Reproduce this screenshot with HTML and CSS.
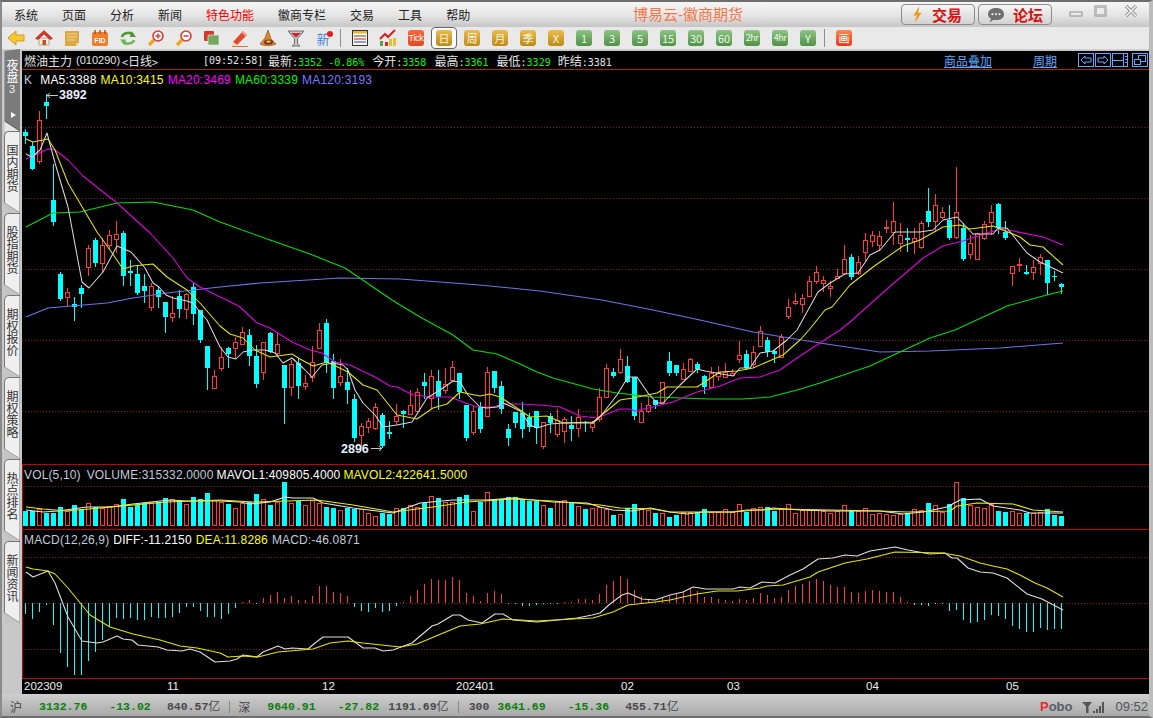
FILE: index.html
```html
<!DOCTYPE html>
<html lang="zh-CN">
<head>
<meta charset="utf-8">
<title>博易云-徽商期货</title>
<link rel="stylesheet" href="styles.css">
<script src="chart.js" defer></script>
</head>
<body>
<div class="window">
  <header class="menubar">
    <nav class="menu">
      <span>系统</span><span>页面</span><span>分析</span><span>新闻</span><span class="menu-hot">特色功能</span><span>徽商专栏</span><span>交易</span><span>工具</span><span>帮助</span>
    </nav>
    <div class="app-title">博易云-徽商期货</div>
    <div class="actions">
      <button class="action">
        <svg class="action-ic" viewBox="0 0 12 18"><path d="M8 0 L1.5 10 L5 10 L3 18 L10.5 7 L6.8 7 Z" fill="#f09a20"/></svg>
        <span>交易</span>
      </button>
      <button class="action">
        <svg class="action-ic wide" viewBox="0 0 18 16"><path d="M9 1 C14 1 17 3.6 17 7.2 C17 10.8 14 13 9 13 L6 13 L3 15.6 L3.8 11.6 C2 10.6 1 9 1 7.2 C1 3.6 4 1 9 1 Z" fill="#6f6f6f"/><circle cx="5.5" cy="7.2" r="1.1" fill="#e4e4e4"/><circle cx="9" cy="7.2" r="1.1" fill="#e4e4e4"/><circle cx="12.5" cy="7.2" r="1.1" fill="#e4e4e4"/></svg>
        <span>论坛</span>
      </button>
    </div>
    <div class="winbtns">
      <svg class="winbtn" viewBox="0 0 20 14"><rect x="4" y="8" width="12" height="4" fill="#e8e8e8" stroke="#8f8f8f"/></svg>
      <svg class="winbtn" viewBox="0 0 20 14"><rect x="4" y="2" width="11" height="10" fill="none" stroke="#8f8f8f"/><rect x="5.5" y="3.5" width="8" height="7" fill="#ececec" stroke="#bdbdbd"/></svg>
      <svg class="winbtn winbtn-close" viewBox="0 0 20 14"><path d="M5 2 L15 12 M15 2 L5 12" stroke="#8f8f8f" stroke-width="3.4"/><path d="M5 2 L15 12 M15 2 L5 12" stroke="#f0f0f0" stroke-width="1.6"/></svg>
    </div>
  </header>

  <div class="toolbar">
    <span class="tool"><svg class="ic" viewBox="0 0 18 16"><path d="M1 8 L9 1 L9 5 L17 5 L17 11 L9 11 L9 15 Z" fill="#f7c832" stroke="#d89a14"/></svg></span>
    <span class="tool"><svg class="ic" viewBox="0 0 18 18"><path d="M4 9 L14 9 L14 16 L4 16 Z" fill="#f2ead8" stroke="#b9a68a"/><rect x="7.5" y="11" width="3.5" height="5" fill="#b5542a"/><path d="M0.5 9.5 L9 1.5 L17.5 9.5 L15 10.5 L9 5 L3 10.5 Z" fill="#d8342a" stroke="#a8201a" stroke-width=".6"/></svg></span>
    <span class="tool"><svg class="ic" viewBox="0 0 18 18"><path d="M2 2 L16 2 L16 14 L13 17 L2 17 Z" fill="#dca844"/><path d="M4 5 L14 5 M4 8 L14 8 M4 11 L12 11" stroke="#f0d890"/><path d="M13 17 L13 14 L16 14 Z" fill="#f0d890"/></svg></span>
    <span class="tool"><svg class="ic" viewBox="0 0 18 18"><rect x="1" y="3" width="16" height="14" rx="2" fill="#ee7d2c"/><path d="M4 1 L4 5 M9 1 L9 5 M14 1 L14 5" stroke="#a84c18" stroke-width="1.4"/><text x="9" y="14" class="ic-text-fid">FID</text></svg></span>
    <span class="tool"><svg class="ic" viewBox="0 0 18 18"><path d="M3 8 C4 3.5 12 2.5 14.5 6" fill="none" stroke="#4a9a38" stroke-width="2.6"/><path d="M12 2 L17 8 L11 8 Z" fill="#4a9a38"/><path d="M15 11 C14 15 6 16 3.5 12.5" fill="none" stroke="#6cb84e" stroke-width="2.6"/><path d="M6 16.5 L1 10.5 L7 10.5 Z" fill="#6cb84e"/></svg></span>
    <span class="tool"><svg class="ic" viewBox="0 0 18 18"><path d="M7 11 L2 16" stroke="#eaa818" stroke-width="3.4"/><circle cx="11" cy="7" r="5" fill="#fff" stroke="#d83a3a" stroke-width="1.6"/><path d="M8.5 7 L13.5 7 M11 4.5 L11 9.5" stroke="#d83a3a" stroke-width="1.5"/></svg></span>
    <span class="tool"><svg class="ic" viewBox="0 0 18 18"><path d="M7 11 L2 16" stroke="#eaa818" stroke-width="3.4"/><circle cx="11" cy="7" r="5" fill="#fff" stroke="#d83a3a" stroke-width="1.6"/><path d="M8.5 7 L13.5 7" stroke="#d83a3a" stroke-width="1.5"/></svg></span>
    <span class="tool"><svg class="ic" viewBox="0 0 18 18"><rect x="1" y="2" width="10" height="10" rx="1" fill="#d8362c"/><rect x="5" y="6" width="11" height="10" rx="1" fill="#72aa5c" stroke="#e8e8e8" stroke-width=".7"/></svg></span>
    <span class="tool"><svg class="ic" viewBox="0 0 18 18"><path d="M2 13 L12 2 L16 6 L6 16 Z" fill="#e2492e"/><path d="M2 13 L1 17 L6 16 Z" fill="#f3d8a8"/><path d="M12 2 L16 6 L14.5 7.5 L10.5 3.5 Z" fill="#f4a080"/><path d="M1 17.5 L17 17.5" stroke="#f07028"/></svg></span>
    <span class="tool"><svg class="ic" viewBox="0 0 18 18"><path d="M9 1 L12 10 L17 15 C12 17 5 17 1 15 L6 9 Z" fill="#d98a30" stroke="#8a4a1c" stroke-width=".7"/><ellipse cx="9.5" cy="13" rx="4.5" ry="2.6" fill="#7a3418"/><ellipse cx="9.5" cy="12.6" rx="2.4" ry="1.2" fill="#e8c05a"/></svg></span>
    <span class="tool"><svg class="ic" viewBox="0 0 18 18"><path d="M1 2 L17 2 L10.5 9.5 L10.5 15 L13 17 L5 17 L7.5 15 L7.5 9.5 Z" fill="#c8c8c8" stroke="#6e6e6e"/><path d="M4 4 L14 4 L9 8.5 Z" fill="#d82030"/></svg></span>
    <span class="tool"><span class="new-glyph">新</span><i class="new-dot"></i></span>
    <span class="tool-sep"></span>
    <span class="tool"><svg class="ic" viewBox="0 0 18 18"><rect x="1.5" y="1.5" width="15" height="15" fill="#fbf8ec" stroke="#333"/><rect x="2" y="2" width="14" height="2.5" fill="#e8b838"/><path d="M3 7 L15 7" stroke="#555"/><path d="M3 10 L15 10" stroke="#d02020"/><path d="M3 13 L15 13" stroke="#2040c0"/></svg></span>
    <span class="tool"><svg class="ic" viewBox="0 0 18 18"><rect x="1" y="12" width="3" height="5" fill="#58a048"/><rect x="6" y="13" width="3" height="4" fill="#e02828"/><rect x="10" y="10" width="3" height="7" fill="#e8c030"/><rect x="14" y="9" width="3" height="8" fill="#e8c030"/><path d="M1 10 L6 5 L9 8 L16 1" fill="none" stroke="#d82020" stroke-width="2"/></svg></span>
    <span class="tool"><span class="tick">Tick</span></span>
    <span class="tool tool-active"><b class="pd gold">日</b></span>
    <span class="tool"><b class="pd gold">周</b></span>
    <span class="tool"><b class="pd gold">月</b></span>
    <span class="tool"><b class="pd gold">季</b></span>
    <span class="tool"><b class="pd gold">X</b></span>
    <span class="tool"><b class="pd green">1</b></span>
    <span class="tool"><b class="pd green">3</b></span>
    <span class="tool"><b class="pd green">5</b></span>
    <span class="tool"><b class="pd green">15</b></span>
    <span class="tool"><b class="pd green">30</b></span>
    <span class="tool"><b class="pd green">60</b></span>
    <span class="tool"><b class="pd green small">2hr</b></span>
    <span class="tool"><b class="pd green small">4hr</b></span>
    <span class="tool"><b class="pd green">Y</b></span>
    <span class="tool-sep"></span>
    <span class="tool"><b class="pd red">画</b></span>
  </div>

  <main class="workspace">
    <aside class="tabs">
      <div class="tab tab-active">
        <svg class="tab-shape" viewBox="0 0 18 82"><path d="M2.5 72 L2.5 2 L18 0 L18 82 Z" fill="#7b7b7b"/><path d="M2.5 72 L18 82 L2.5 82 Z" fill="#e6e6e6"/><path d="M2.5 72 L18 82" stroke="#555" fill="none"/></svg>
        <span class="tab-label">夜盘</span><span class="tab-num">3</span><i class="tab-arrow"></i>
      </div>
      <div class="tab"><svg class="tab-shape" viewBox="0 0 18 82"><path d="M2.5 72 L2.5 5 Q2.5 1 6 .5 L18 .5 L18 82 Z" fill="#efefef" stroke="#777"/><path d="M2.5 72 L18 82 L2.5 82 Z" fill="#c4c4c4"/></svg><span class="tab-label">国内期货</span></div>
      <div class="tab"><svg class="tab-shape" viewBox="0 0 18 82"><path d="M2.5 72 L2.5 5 Q2.5 1 6 .5 L18 .5 L18 82 Z" fill="#efefef" stroke="#777"/><path d="M2.5 72 L18 82 L2.5 82 Z" fill="#c4c4c4"/></svg><span class="tab-label">股指期货</span></div>
      <div class="tab"><svg class="tab-shape" viewBox="0 0 18 82"><path d="M2.5 72 L2.5 5 Q2.5 1 6 .5 L18 .5 L18 82 Z" fill="#efefef" stroke="#777"/><path d="M2.5 72 L18 82 L2.5 82 Z" fill="#c4c4c4"/></svg><span class="tab-label">期权报价</span></div>
      <div class="tab"><svg class="tab-shape" viewBox="0 0 18 82"><path d="M2.5 72 L2.5 5 Q2.5 1 6 .5 L18 .5 L18 82 Z" fill="#efefef" stroke="#777"/><path d="M2.5 72 L18 82 L2.5 82 Z" fill="#c4c4c4"/></svg><span class="tab-label">期权策略</span></div>
      <div class="tab"><svg class="tab-shape" viewBox="0 0 18 82"><path d="M2.5 72 L2.5 5 Q2.5 1 6 .5 L18 .5 L18 82 Z" fill="#efefef" stroke="#777"/><path d="M2.5 72 L18 82 L2.5 82 Z" fill="#c4c4c4"/></svg><span class="tab-label">热点排名</span></div>
      <div class="tab"><svg class="tab-shape" viewBox="0 0 18 82"><path d="M2.5 72 L2.5 5 Q2.5 1 6 .5 L18 .5 L18 82 Z" fill="#efefef" stroke="#777"/><path d="M2.5 72 L18 82 L2.5 82 Z" fill="#c4c4c4"/></svg><span class="tab-label">新闻资讯</span></div>
    </aside>

    <section class="chart">
      <div class="quote">
        <div class="symbol">
          <span class="cjk">燃油主力</span><span class="code">(010290)</span><span class="period"><u>&lt;</u>日线<u>&gt;</u></span>
        </div>
        <span class="q-time">[09:52:58]</span>
        <span class="q-item">最新<i>:</i><em>3352</em></span>
        <span class="q-item q-near"><em>-0.86%</em></span>
        <span class="q-item">今开<i>:</i><em>3358</em></span>
        <span class="q-item">最高<i>:</i><em>3361</em></span>
        <span class="q-item">最低<i>:</i><em>3329</em></span>
        <span class="q-item q-last">昨结<i>:3381</i></span>
        <div class="quote-links">
          <a class="q-link">商品叠加</a>
          <a class="q-link q-link-period">周期</a>
          <div class="nav-btns">
            <svg class="nav-btn" viewBox="0 0 16 14"><rect x=".5" y=".5" width="15" height="13" fill="none" stroke="#5ea8ff"/><path d="M7 3 L3 7 L7 11 L7 9 L13 9 L13 5 L7 5 Z" fill="none" stroke="#5ea8ff"/></svg>
            <svg class="nav-btn" viewBox="0 0 16 14"><rect x=".5" y=".5" width="15" height="13" fill="none" stroke="#5ea8ff"/><path d="M9 3 L13 7 L9 11 L9 9 L3 9 L3 5 L9 5 Z" fill="none" stroke="#5ea8ff"/></svg>
            <svg class="nav-btn" viewBox="0 0 16 14"><rect x=".5" y=".5" width="15" height="13" fill="none" stroke="#5ea8ff"/><path d="M1 7.5 L11 7.5 M11.5 1 L11.5 13 M13 3.5 L15 3.5 M13 6.5 L15 6.5 M13 9.5 L15 9.5" stroke="#5ea8ff"/></svg>
            <svg class="nav-btn nav-btn-gap" viewBox="0 0 16 14"><rect x=".5" y=".5" width="15" height="13" fill="none" stroke="#5ea8ff"/><rect x="6.5" y="2.5" width="7" height="6" fill="none" stroke="#5ea8ff"/><rect x="2.5" y="6.5" width="6" height="5" fill="#000" stroke="#5ea8ff"/></svg>
          </div>
        </div>
      </div>

      <div class="panel panel-main" id="panel-main">
        <div class="legend">
          <span class="c-k">K</span><span class="c-white">MA5:3388</span><span class="c-yellow">MA10:3415</span><span class="c-magenta">MA20:3469</span><span class="c-green">MA60:3339</span><span class="c-blue">MA120:3193</span>
        </div>
      </div>
      <div class="panel panel-vol" id="panel-vol">
        <div class="legend">
          <span class="c-k">VOL(5,10)</span><span class="c-k">VOLUME:315332.0000</span><span class="c-white">MAVOL1:409805.4000</span><span class="c-yellow">MAVOL2:422641.5000</span>
        </div>
      </div>
      <div class="panel panel-macd" id="panel-macd">
        <div class="legend">
          <span class="c-k">MACD(12,26,9)</span><span class="c-white">DIFF:-11.2150</span><span class="c-yellow">DEA:11.8286</span><span class="c-k">MACD:-46.0871</span>
        </div>
      </div>
      <div class="axis" id="panel-axis"></div>
    </section>
  </main>

  <footer class="statusbar">
    <span class="st-name">沪</span>
    <span class="st-val">3132.76</span>
    <span class="st-chg">-13.02</span>
    <span class="st-amt">840.57<i>亿</i></span>
    <span class="st-sep"></span>
    <span class="st-name">深</span>
    <span class="st-val">9640.91</span>
    <span class="st-chg">-27.82</span>
    <span class="st-amt">1191.69<i>亿</i></span>
    <span class="st-sep"></span>
    <span class="st-code">300</span>
    <span class="st-val st-val-tight">3641.69</span>
    <span class="st-chg">-15.36</span>
    <span class="st-amt">455.71<i>亿</i></span>
    <div class="st-right">
      <span class="pobo"><b>P</b>obo</span>
      <svg class="signal" viewBox="0 0 22 13"><path d="M0 1 L10 1 L6.5 5.5 L6.5 12 L4 12 L4 5.5 Z" fill="#555"/><rect x="11" y="10" width="2" height="2" fill="#555"/><rect x="14" y="8" width="2" height="4" fill="#555"/><rect x="17" y="5" width="2" height="7" fill="#555"/><rect x="20" y="1" width="2" height="11" fill="#555"/></svg>
      <span class="clock">09:52</span>
    </div>
  </footer>
</div>
</body>
</html>
```

FILE: styles.css
```css
* { box-sizing: border-box; }
html, body { margin: 0; padding: 0; background: #c4c4c4; }
body { font-family: "Liberation Sans", "Noto Sans CJK SC", sans-serif; }

.window {
  width: 1153px;
  height: 718px;
  display: flex;
  flex-direction: column;
  border-top: 2px solid #6e6e6e;
  border-left: 2px solid #8a8a8a;
  border-right: 4px solid #bcbcbc;
  border-bottom: 2px solid #6e6e6e;
  background: #c8c8c8;
  overflow: hidden;
}

/* menu bar */
.menubar {
  height: 25px;
  flex: none;
  display: flex;
  align-items: center;
  padding-left: 12px;
  background: linear-gradient(#f6f6f6, #e4e4e4 55%, #c6c6c6);
}
.menu { display: flex; gap: 24px; font-size: 12px; color: #222; width: 456px; white-space: nowrap; }
.menu-hot { color: #f00000; }
.app-title {
  margin-left: 163px;
  width: 112px;
  font-size: 15px;
  line-height: 20px;
  color: #f4774a;
  white-space: nowrap;
}
.actions { display: flex; gap: 3px; margin-left: 156px; }
.action {
  width: 74px;
  height: 21px;
  padding: 0 0 0 10px;
  display: flex;
  align-items: center;
  gap: 9px;
  border: 1px solid #8c8c8c;
  border-radius: 4px;
  background: linear-gradient(#f6f6f6, #d2d2d2);
  color: #d81010;
  font: bold 15px "Noto Sans CJK SC", sans-serif;
}
.action-ic { width: 11px; height: 17px; flex: none; }
.action-ic.wide { width: 18px; height: 16px; margin-left: -2px; margin-right: -1px; }
.winbtns { display: flex; margin-left: 14px; gap: 5px; align-self: flex-start; margin-top: 2px; }
.winbtn { width: 20px; height: 14px; }
.winbtn-close { margin-left: 5px; }

/* tool bar */
.toolbar {
  height: 23px;
  flex: none;
  display: flex;
  align-items: center;
  background: #e9e9e9;
  border-bottom: 1px solid #d0d0d0;
  margin-bottom: 1px;
}
.tool { width: 28px; height: 22px; flex: none; display: flex; align-items: center; justify-content: center; position: relative; }
.ic { width: 18px; height: 18px; display: block; }
.ic-text-fid { font: bold 7px "Liberation Sans", sans-serif; fill: #fff; text-anchor: middle; }
.tool-sep { width: 8px; height: 18px; flex: none; margin-left: 0; position: relative; }
.tool-sep::before { content: ""; display: block; width: 1px; height: 18px; margin-left: 2px; background: #8d8d8d; }
.new-glyph { font: 13px "Noto Sans CJK SC", sans-serif; color: #4a86e0; margin-right: 2px; }
.new-dot { position: absolute; left: 17px; top: 4px; width: 6px; height: 6px; border-radius: 50%; background: #e81c1c; }
.tick {
  width: 16px;
  height: 16px;
  border-radius: 3px;
  background: linear-gradient(#f8683c, #e04a20);
  color: #fff;
  font: 9px/16px "Liberation Sans", sans-serif;
  text-align: center;
  letter-spacing: -.3px;
}
.pd {
  width: 16px;
  height: 16px;
  display: block;
  border-radius: 3px;
  text-align: center;
  color: #f6f2dc;
  font: 400 11px/16px "Noto Sans CJK SC", "Liberation Sans", sans-serif;
  overflow: hidden;
}
.pd.small { font-size: 9px; letter-spacing: -.5px; }
.gold { background: linear-gradient(#e8bd52, #bc8a14); }
.green { background: linear-gradient(#8ec484, #4f9146); color: #eef6ea; }
.red { background: linear-gradient(#f88a52, #ea3a1c); color: #fff; }
.tool-active::before {
  content: "";
  position: absolute;
  left: 1px;
  right: 1px;
  top: 0;
  bottom: 0;
  background: #fff;
  border: 1px solid #666;
  border-radius: 4px;
}
.tool-active .pd { position: relative; }

/* work space */
.workspace { flex: 1; min-height: 0; display: flex; }

.tabs { width: 20px; flex: none; margin-top: -2px; display: flex; flex-direction: column; }
.tab {
  position: relative;
  height: 82px;
  flex: none;
  padding: 13px 0 0 4px;
  display: flex;
  flex-direction: column;
  align-items: flex-start;
  color: #333;
}
.tab-shape { position: absolute; left: 0; top: 0; width: 18px; height: 82px; }
.tab-label {
  position: relative;
  writing-mode: vertical-rl;
  text-orientation: upright;
  font: 12px/13px "Noto Sans CJK SC", sans-serif;
  letter-spacing: 0;
}
.tab-active { color: #fff; padding-top: 10px; }
.tab-num { position: relative; font-size: 11px; line-height: 11px; margin: 1px 0 0 3px; color: #eee; }
.tab-arrow {
  position: absolute;
  left: 9px;
  top: 63px;
  border-left: 5px solid #fff;
  border-top: 3.5px solid transparent;
  border-bottom: 3.5px solid transparent;
}

.chart { flex: 1; min-width: 0; background: #000; display: flex; flex-direction: column; color: #ddd; }

.quote {
  height: 19px;
  flex: none;
  display: flex;
  align-items: center;
  padding: 0 1px 0 2px;
  border-bottom: 1px solid #a02818;
  font: 10px "DejaVu Sans Mono", monospace;
  color: #e4e4e4;
  white-space: nowrap;
}
.symbol { width: 179px; display: flex; align-items: center; gap: 4px; }
.cjk { font: 12px "Noto Sans CJK SC", sans-serif; }
.code { font: 11px "Liberation Sans", sans-serif; }
.period { margin-left: -2px; font: 12px "Noto Sans CJK SC", sans-serif; }
.period u { text-decoration: none; font: 10px "DejaVu Sans Mono", monospace; }
.q-time { width: 57px; }
.q-item { margin-left: 8px; font: 12px "Noto Sans CJK SC", sans-serif; }
.q-item i { font: 10px "DejaVu Sans Mono", monospace; }
.q-item em { font: 10px "DejaVu Sans Mono", monospace; color: #18f018; }
.q-near { margin-left: 6px; }
.q-last { margin-left: 7px; }
.quote-links { margin-left: auto; display: flex; align-items: center; }
.q-link { color: #5ea8ff; text-decoration: underline; font: 12px "Noto Sans CJK SC", sans-serif; }
.q-link-period { margin-left: 41px; margin-right: 21px; }
.nav-btns { display: flex; gap: 1px; }
.nav-btn { width: 16px; height: 14px; display: block; }
.nav-btn-gap { margin-left: 3px; }

.panel { position: relative; flex: none; overflow: hidden; }
.panel-main { height: 394px; }
.panel-vol { height: 65px; border-top: 1px solid #c00000; border-left: 1px solid #c00000; }
.panel-macd { height: 149px; border-top: 1px solid #c00000; border-left: 1px solid #c00000; }
.plot { position: absolute; left: 0; top: 0; width: 100%; height: 100%; display: block; }
.legend {
  position: relative;
  z-index: 1;
  display: flex;
  gap: 4px;
  padding: 3px 0 0 2px;
  font-size: 12px;
  line-height: 14px;
  letter-spacing: .2px;
  white-space: nowrap;
}
.panel-vol .legend, .panel-macd .legend { padding-left: 1px; letter-spacing: .15px; }
.panel-vol .legend { gap: 3px; }
.panel-vol .legend span:first-child { margin-right: 3px; }
.c-k { color: #c0ccdc; }
.c-white { color: #fff; }
.c-yellow { color: #ffff00; }
.c-magenta { color: #ff00ff; }
.c-green { color: #00f000; }
.c-blue { color: #7878ff; }
.panel-main .legend span:first-child { margin-right: 4px; }

.axis { flex: 1; position: relative; border-top: 1px solid #c00000; }
.axis-text { font: 11.5px "Liberation Sans", sans-serif; fill: #eee; }
.peak-text { font: bold 12.5px "Liberation Sans", sans-serif; fill: #e8f0ff; }

/* status bar */
.statusbar {
  height: 22px;
  flex: none;
  display: flex;
  align-items: center;
  padding: 4px 0 0 8px;
  background: linear-gradient(#cfcfcf, #a8a8a8);
  font: bold 11.5px/14px "Liberation Mono", monospace;
  color: #4a4a4a;
  white-space: nowrap;
}
.st-name { width: 13px; font: 12px/14px "Noto Sans CJK SC", sans-serif; color: #444; }
.st-val { margin-left: 16px; color: #0e7f0e; }
.st-val-tight { margin-left: 8px; }
.st-chg { margin-left: 22px; color: #0e7f0e; width: 41px; }
.st-amt { width: 70px; text-align: right; }
.st-amt i { display: inline-block; font: 12px/12px "Noto Sans CJK SC", sans-serif; vertical-align: -1px; }
.st-sep { width: 1px; height: 12px; background: #8a8a8a; margin: 0 8px 0 9px; }
.st-code { margin-left: 2px; }
.st-right { margin-left: auto; display: flex; align-items: center; padding-right: 1px; }
.pobo { font: bold 13px/14px "Liberation Sans", sans-serif; color: #555e6a; }
.pobo b { color: #f02828; }
.signal { width: 22px; height: 13px; margin-left: 10px; }
.clock { margin-left: 11px; font: 13px/14px "Liberation Sans", sans-serif; color: #555; }
```

FILE: chart.js
```js
/* [isRed, high, bodyTop, bodyBottom, low] in page pixels; candle i sits at x = 25 + 7i */
var CANDLES = [
[0,129,132,136,144],[0,142,146,169,170],[1,111,120,161,164],[0,94,102,106,119],[0,164,200,222,226],
[0,272,274,299,301],[1,288,292,297,306],[0,297,304,307,321],[0,285,288,294,308],[1,245,248,267,276],
[0,238,240,263,267],[1,238,245,263,273],[1,230,235,245,249],[1,221,234,239,253],[0,231,233,276,286],
[0,260,271,273,286],[0,265,274,293,295],[0,274,286,291,303],[1,283,286,307,311],[0,287,290,297,308],
[0,302,302,317,333],[1,296,313,317,322],[0,290,296,309,318],[1,293,294,309,319],[0,283,287,314,325],
[0,310,310,340,343],[0,346,346,368,390],[1,370,376,388,388],[1,347,357,368,371],[0,347,348,354,368],
[1,337,342,348,359],[1,327,332,344,345],[0,329,335,356,366],[0,345,356,384,388],[1,342,342,372,380],
[0,332,333,352,353],[1,332,344,353,357],[0,365,365,388,424],[1,360,364,387,396],[0,358,363,386,399],
[1,375,383,386,390],[1,346,362,377,382],[1,323,330,348,349],[0,319,323,363,373],[0,354,361,388,399],
[1,359,376,382,386],[0,368,382,390,404],[0,394,399,438,442],[1,423,426,435,447],[1,418,421,427,433],
[1,403,407,428,430],[0,413,415,446,448],[0,421,432,434,439],[1,404,416,421,425],[0,410,411,414,428],
[1,390,405,414,414],[1,388,392,411,413],[0,373,382,386,399],[1,370,376,398,409],[0,370,381,397,410],
[1,368,384,390,394],[1,361,367,380,381],[0,373,373,392,399],[0,405,405,438,441],[1,406,411,432,435],
[0,402,407,429,433],[1,367,372,416,417],[0,371,371,388,393],[0,381,386,409,414],[0,424,429,438,446],
[0,412,412,423,428],[0,402,413,429,438],[0,413,417,427,432],[0,411,411,428,444],[1,422,422,446,449],
[0,413,416,423,433],[1,409,420,434,437],[1,417,419,431,443],[0,416,425,429,441],[1,409,417,428,437],
[0,421,422,423,432],[1,421,423,427,432],[1,388,397,419,422],[1,364,368,397,397],[0,368,372,376,378],
[1,349,359,372,374],[0,356,366,382,383],[0,377,377,416,420],[1,403,411,422,422],[1,397,405,411,413],
[0,400,400,405,409],[1,382,382,403,404],[0,352,361,373,376],[0,365,365,373,376],[1,363,369,379,380],
[1,358,359,371,372],[0,362,364,369,373],[0,375,376,387,394],[1,367,373,387,388],[1,366,372,376,381],
[1,363,372,377,378],[1,369,373,375,376],[1,341,355,359,363],[0,350,354,368,370],[1,346,352,364,367],
[1,326,331,346,347],[0,337,340,352,357],[0,350,351,354,363],[1,334,337,357,357],[1,299,307,316,319],
[1,293,301,303,305],[1,294,298,304,313],[1,276,281,296,296],[1,266,272,281,284],[1,276,280,283,292],
[1,281,286,288,297],[1,269,276,278,278],[1,245,259,273,273],[0,254,257,277,280],[1,256,262,273,275],
[1,233,240,252,261],[1,231,235,241,247],[1,231,236,245,251],[1,220,227,228,233],[1,202,221,232,245],
[1,223,235,243,252],[0,228,238,240,252],[1,228,238,241,254],[1,221,223,247,249],[0,188,211,222,227],
[1,194,205,221,232],[1,207,212,217,219],[0,205,220,238,240],[1,167,212,237,239],[0,223,228,259,261],
[1,235,243,254,259],[1,233,233,259,260],[1,221,224,238,240],[1,205,212,222,235],[0,203,204,228,234],
[0,221,232,238,240],[1,266,266,273,286],[1,258,264,265,272],[0,265,272,274,275],[1,260,267,272,280],
[1,254,257,263,275],[0,260,260,283,295],[0,271,276,277,281],[0,283,284,287,294]
];

var VOL = [511,511,509,513,513,507,511,505,509,503,507,508,506,504,499,507,505,503,502,502,498,499,501,504,497,499,493,500,
502,504,508,503,502,494,499,505,502,482,503,501,505,500,503,507,508,510,508,509,509,513,516,513,514,508,508,505,507,503,
496,498,502,502,497,495,511,502,492,499,499,497,497,499,501,501,505,508,501,500,502,506,509,508,507,509,515,514,
508,504,508,510,513,513,517,515,512,512,512,509,512,512,509,512,504,512,508,507,507,511,509,
504,513,510,510,510,511,513,511,505,510,511,508,514,513,514,515,514,513,509,510,503,505,512,504,482,498,505,507,508,504,511,512,511,513,513,513,512,509,515,516];

var MACD = [614,619,612,605,625,653,667,675,675,661,652,640,627,618,619,618,620,620,617,618,618,617,613,607,607,611,617,617,
619,614,608,602,600,603,598,595,592,598,596,600,600,596,586,586,592,593,596,607,611,612,608,612,611,606,602,596,590,584,
579,580,580,577,580,593,596,601,593,591,594,603,603,606,606,605,604,603,603,602,602,599,599,600,594,
585,581,576,579,590,596,599,602,598,596,593,592,589,591,597,597,599,600,601,599,600,598,593,595,598,597,590,586,
584,581,579,581,585,587,587,592,593,591,590,591,592,592,597,602,605,605,606,604,604,611,610,620,623,622,620,615,616,619,626,629,632,632,628,630,629,629];

var MA5 = "26,154 32,157 40,150 47,133 55,163 68,207 82,282 89,288 103,272 117,246 131,252 145,268 153,283 159,287 166,295 173,298 187,301 193,303 200,312 207,320 220,347 228,357 236,359 243,352 252,350 265,350 275,353 283,363 292,358 303,368 312,377 322,365 333,363 343,365 348,370 355,390 363,403 375,415 383,427 397,425 412,422 427,398 440,390 453,381 460,382 468,395 480,407 487,408 497,407 503,403 510,406 520,411 530,425 537,428 550,424 563,423 593,423 600,417 617,395 628,377 637,377 648,393 657,403 663,403 680,385 697,369 705,371 733,376 740,368 750,368 760,353 773,351 787,340 797,330 818,292 830,283 845,274 858,273 870,255 880,250 895,232 920,232 933,230 943,220 957,217 973,234 993,234 998,228 1007,228 1027,253 1040,262 1063,273";
var MA10 = "26,139 33,142 48,139 55,150 68,183 97,232 110,250 123,269 133,266 153,264 167,277 187,290 200,303 220,326 230,334 243,338 255,350 270,357 292,354 300,359 313,366 327,362 348,372 363,385 377,390 397,415 417,419 433,408 447,404 460,392 480,396 490,394 500,397 520,410 530,417 547,416 563,423 593,422 620,400 633,398 657,393 667,387 697,387 720,372 737,371 753,368 783,355 800,340 809,330 825,310 832,307 850,285 873,267 903,246 920,240 943,227 960,225 970,229 993,226 1020,237 1030,245 1043,247 1063,265";
var MA20 = "26,159 48,149 55,150 68,160 83,176 117,203 150,233 173,258 187,278 200,287 220,297 227,300 240,307 257,323 270,328 292,342 310,350 322,353 335,362 350,365 375,377 390,386 397,387 413,395 433,397 450,397 463,402 477,407 493,407 503,404 520,404 540,405 560,407 580,416 597,418 620,409 630,409 635,411 653,407 673,402 697,392 720,386 740,378 760,377 780,370 797,358 820,343 840,330 850,322 895,282 907,272 923,258 943,246 963,241 990,232 1003,229 1043,237 1063,245";
var MA60 = "26,227 53,213 80,212 117,203 153,202 193,210 220,222 270,240 310,254 345,268 370,285 392,300 420,317 453,335 473,350 497,354 520,364 537,372 553,378 593,389 617,393 653,397 710,399 743,399 770,397 797,390 820,383 870,366 900,352 930,338 955,330 1007,306 1043,296 1063,291";
var MA120 = "26,317 48,308 107,303 133,298 167,293 220,287 260,283 340,278 400,279 480,285 540,291 602,300 653,310 700,320 753,332 820,343 880,352 930,351 1000,348 1063,343";
var VMA1 = "26,510 43,512 58,511 87,507 110,507 133,504 170,500 187,501 220,501 240,502 250,504 270,502 285,497 293,498 313,498 323,503 353,508 393,513 420,503 453,500 487,500 513,498 553,502 587,503 600,507 613,510 633,511 650,508 670,512 687,514 703,512 733,512 747,510 763,510 773,508 800,510 830,511 880,511 903,514 923,512 947,507 960,500 980,499 993,506 1020,510 1030,513 1063,513";
var VMA2 = "26,507 43,509 67,511 100,508 133,505 167,502 220,500 253,502 287,501 317,500 353,505 393,512 433,507 467,502 513,499 553,501 587,504 600,505 620,508 653,509 670,512 700,512 733,512 757,510 780,509 830,510 880,511 907,512 950,511 957,506 977,503 1013,504 1033,510 1063,512";
var DIFF = "26,572 33,577 48,571 55,583 68,617 82,641 97,643 103,642 117,636 123,639 132,640 138,645 158,647 167,650 182,651 190,649 200,652 215,662 230,661 237,659 243,655 257,657 263,652 278,646 285,649 292,648 308,649 315,643 323,637 348,637 363,648 375,648 383,651 393,650 412,643 432,626 438,624 453,615 460,615 468,620 482,623 495,614 503,614 513,620 537,622 577,618 592,615 600,613 610,604 622,595 628,593 642,599 655,600 670,595 683,592 693,587 700,588 705,589 733,589 740,587 750,588 762,582 775,583 790,575 803,569 818,559 833,558 845,555 857,556 870,551 895,547 908,550 930,554 945,553 952,558 957,558 968,568 980,572 993,573 1007,578 1027,594 1042,599 1063,610";
var DEA = "26,567 33,569 48,571 55,574 68,588 90,615 110,627 133,634 160,640 180,646 197,648 220,653 228,657 243,656 258,657 278,652 313,649 330,643 348,641 363,643 400,647 417,644 460,626 480,624 503,619 537,621 573,619 593,618 613,612 628,605 655,602 670,600 683,597 697,594 717,591 737,591 760,588 767,586 783,585 810,577 818,572 845,563 867,559 895,552 943,553 960,556 980,563 993,566 1007,569 1020,575 1035,583 1047,588 1063,597";

var RED = "#ff3a3a", CYAN = "#00ffff", GRID = "#7c1c1c";

function rect(x, y, w, h, fill) {
  return '<rect x="' + x + '" y="' + y + '" width="' + w + '" height="' + h + '" fill="' + fill + '"/>';
}
function hollow(x, y, w, h) {
  return '<rect x="' + (x + 0.5) + '" y="' + (y + 0.5) + '" width="' + (w - 1) + '" height="' + Math.max(h - 1, 0) + '" fill="none" stroke="' + RED + '"/>';
}
function grid(ys) {
  return ys.map(function (y) {
    return '<path d="M22 ' + (y + 0.5) + ' H1149" stroke="' + GRID + '" stroke-dasharray="1 2"/>';
  }).join("");
}
function line(points, colour) {
  return '<polyline class="ln" points="' + points + '" fill="none" stroke="' + colour + '" stroke-width="1.05" stroke-linejoin="round"/>';
}
function mount(id, inner) {
  var panel = document.getElementById(id);
  var box = panel.getBoundingClientRect();
  var vb = [box.left + panel.clientLeft, box.top + panel.clientTop, panel.clientWidth, panel.clientHeight].join(" ");
  var holder = document.createElement("div");
  holder.innerHTML = '<svg class="plot" xmlns="http://www.w3.org/2000/svg" viewBox="' + vb + '">' + inner + '</svg>';
  panel.insertBefore(holder.firstChild, panel.firstChild);
}
function crisp(s) { return '<g shape-rendering="crispEdges">' + s + '</g>'; }

var main = grid([127, 198, 269, 340, 411]), bodies = "";
CANDLES.forEach(function (c, i) {
  var x = 25 + 7 * i, red = c[0], col = red ? RED : CYAN;
  var h = Math.max(c[3] - c[2], 1);
  if (red) {
    if (c[2] > c[1]) bodies += rect(x, c[1], 1, c[2] - c[1], col);
    if (c[4] > c[3]) bodies += rect(x, c[3], 1, c[4] - c[3], col);
    bodies += hollow(x - 2, c[2], 5, h + 1);
  } else {
    bodies += rect(x, c[1], 1, c[4] - c[1], col);
    bodies += rect(x - 2, c[2], 5, h, col);
  }
});
main = crisp(main + bodies) +
  line(MA120, "#7272ea") + line(MA60, "#00e000") + line(MA20, "#e000e0") + line(MA10, "#e6e600") + line(MA5, "#d8d8d8") +
  '<text class="peak-text" x="59" y="99">3892</text><path d="M47 95.5 H58 M50 93 L47 95.5 L50 98" stroke="#c8c8c8" fill="none"/>' +
  '<text class="peak-text" x="341" y="453">2896</text><path d="M371 448.5 H382 M379 446 L382 448.5 L379 451" stroke="#c8c8c8" fill="none"/>';
mount("panel-main", main);

var vol = grid([486]), vb = "";
VOL.forEach(function (y, i) {
  var x = 25 + 7 * i, h = 526 - y;
  vb += CANDLES[i][0] ? hollow(x - 2, y, 5, h) : rect(x - 2, y, 5, h, CYAN);
});
mount("panel-vol", crisp(vol + vb) + line(VMA1, "#e8e8e8") + line(VMA2, "#f0f000"));

var md = "";
MACD.forEach(function (y, i) {
  var x = 25 + 7 * i;
  md += y < 603 ? rect(x, y, 1, 603 - y, RED) : rect(x, 603, 1, Math.max(y - 603, 1), CYAN);
});
mount("panel-macd", crisp(grid([557, 603, 649]) + md) + line(DIFF, "#e0e0e0") + line(DEA, "#e6e600"));

var labels = [[24, "202309"], [167, "11"], [322, "12"], [456, "202401"], [621, "02"], [727, "03"], [866, "04"], [1006, "05"]];
mount("panel-axis", labels.map(function (l) {
  return '<text class="axis-text" x="' + l[0] + '" y="690">' + l[1] + '</text>';
}).join(""));
```
